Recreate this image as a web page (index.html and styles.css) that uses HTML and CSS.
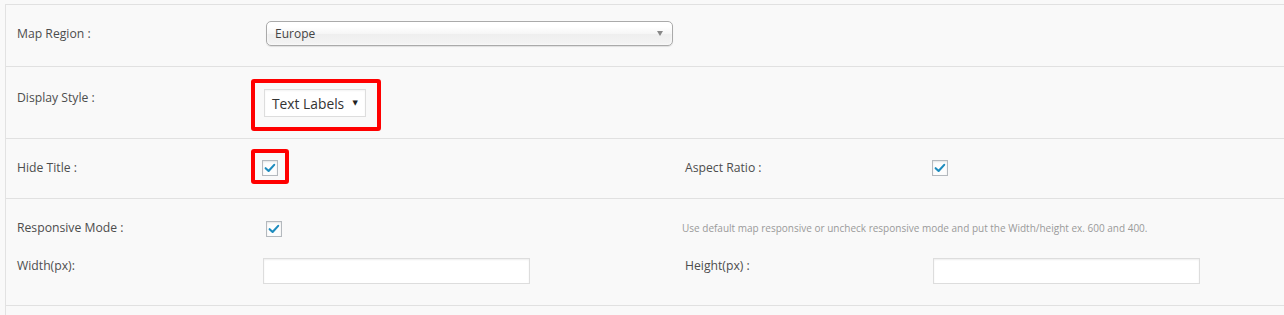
FILE: index.html
```html
<!DOCTYPE html>
<html>
<head>
<meta charset="utf-8">
<link rel="stylesheet" href="styles.css">
</head>
<body>
<div class="panel">
  <div class="row row-region">
    <div class="label">Map Region :</div>
    <div class="field wide">
      <div class="chosen">
        <span class="chosen-text">Europe</span>
        <span class="chosen-arrow"></span>
      </div>
    </div>
  </div>

  <div class="row row-style">
    <div class="label">Display Style :</div>
    <div class="field">
      <div class="mark mark-select">
        <div class="plain-select">
          <span>Text Labels</span>
          <span class="caret">&#9660;</span>
        </div>
      </div>
    </div>
  </div>

  <div class="row row-title">
    <div class="label">Hide Title :</div>
    <div class="field">
      <div class="mark mark-check">
        <span class="check"><svg viewBox="0 0 16 16" width="14" height="14"><path d="M3 8.2 L6.4 11.4 L12.8 4.4" fill="none" stroke="#1e8cbe" stroke-width="2.4" stroke-linecap="round" stroke-linejoin="round"/></svg></span>
      </div>
    </div>
    <div class="label">Aspect Ratio :</div>
    <div class="field">
      <span class="check check-aspect"><svg viewBox="0 0 16 16" width="14" height="14"><path d="M3 8.2 L6.4 11.4 L12.8 4.4" fill="none" stroke="#1e8cbe" stroke-width="2.4" stroke-linecap="round" stroke-linejoin="round"/></svg></span>
    </div>
  </div>

  <div class="row row-size">
    <div class="label">Responsive Mode :</div>
    <div class="field">
      <span class="check check-resp"><svg viewBox="0 0 16 16" width="14" height="14"><path d="M3 8.2 L6.4 11.4 L12.8 4.4" fill="none" stroke="#1e8cbe" stroke-width="2.4" stroke-linecap="round" stroke-linejoin="round"/></svg></span>
    </div>
    <div class="help">Use default map responsive or uncheck responsive mode and put the Width/height ex. 600 and 400.</div>

    <div class="label label-input">Width(px):</div>
    <div class="field"><input class="text-input" type="text"></div>
    <div class="label label-input">Height(px) :</div>
    <div class="field"><input class="text-input" type="text"></div>
  </div>
  <div class="row-end"></div>
</div>
</body>
</html>
```

FILE: styles.css
```css
html, body {
  margin: 0;
  padding: 0;
  background: #f9f9f9;
}

body {
  font-family: "Open Sans", "Liberation Sans", sans-serif;
  color: #555;
  font-size: 12px;
  padding-top: 4px;
  padding-left: 5px;
  height: 311px;
  overflow: hidden;
}

.panel {
  border-left: 1px solid #e2e2e2;
  background: #f9f9f9;
  height: 100%;
}

.row {
  display: grid;
  grid-template-columns: 246px 422px 248px 1fr;
  align-items: start;
  padding-left: 11px;
  border-top: 1px solid #e1e1e1;
}

.label {
  line-height: 16px;
  font-size: 12.2px;
  color: #4d4d4d;
}

.field {
  display: flex;
  align-items: flex-start;
}

/* Row 1 */
.row-region {
  height: 61px;
}
.row-region .label {
  margin-top: 21px;
}
.field.wide {
  grid-column: 2 / 3;
}
.chosen {
  margin-top: 16px;
  margin-left: 3px;
  width: 407px;
  height: 25px;
  box-sizing: border-box;
  border: 1px solid #aaa;
  border-radius: 5px;
  background: linear-gradient(#fff 20%, #f6f6f6 50%, #eee 52%, #f4f4f4 100%);
  box-shadow: inset 0 0 3px #fff, 0 1px 1px rgba(0,0,0,0.1);
  display: flex;
  align-items: center;
  justify-content: space-between;
  padding: 0 9px 0 8px;
  color: #444;
  font-size: 12px;
}
.chosen-arrow {
  width: 0;
  height: 0;
  border-left: 3px solid transparent;
  border-right: 3px solid transparent;
  border-top: 5px solid #888;
}

/* Row 2 */
.row-style {
  height: 71px;
}
.row-style .label {
  margin-top: 23px;
}
.mark {
  border: 4px solid #ff0000;
  border-radius: 3px;
  margin-left: -12px;
}
.mark-select {
  margin-top: 12px;
  padding: 6px 11px 10px 9px;
}
.plain-select {
  width: 102px;
  height: 28px;
  box-sizing: border-box;
  border: 1px solid #ddd;
  background: #fff;
  box-shadow: inset 0 1px 2px rgba(0,0,0,0.05);
  display: flex;
  align-items: center;
  justify-content: space-between;
  padding: 0 7px 0 7px;
  font-size: 13.8px;
  color: #333;
}
.caret {
  font-size: 7px;
  color: #222;
  font-family: "DejaVu Sans", sans-serif;
}

/* Row 3 */
.row-title {
  height: 59px;
}
.row-title .label {
  margin-top: 21px;
}
.mark-check {
  margin-top: 10px;
  padding: 7px 7px 4px 7px;
  display: flex;
}
.check {
  width: 16px;
  height: 16px;
  box-sizing: border-box;
  border: 1px solid #b4b9be;
  background: #fdfdfd;
  box-shadow: inset 0 1px 2px rgba(0,0,0,0.1);
  display: flex;
  align-items: center;
  justify-content: center;
}
.check-aspect {
  margin-top: 21px;
  margin-left: -1px;
}

/* Row 4 */
.row-size {
  height: 108px;
  box-sizing: border-box;
  border-bottom: 1px solid #e1e1e1;
  grid-template-rows: 30px 27px;
  row-gap: 15px;
  padding-top: 14px;
}
.row-size .label {
  margin-top: 7px;
}
.row-size .label-input {
  margin-top: 0;
}
.check-resp {
  margin-top: 8px;
  margin-left: 3px;
}
.help {
  grid-column: 3 / 5;
  margin-left: -3px;
  margin-top: 9px;
  font-size: 10px;
  line-height: 12px;
  color: #9a9a9a;
}
.text-input {
  margin: 0;
  width: 267px;
  height: 26px;
  box-sizing: border-box;
  border: 1px solid #ddd;
  background: #fff;
  box-shadow: inset 0 1px 2px rgba(0,0,0,0.07);
  font-family: inherit;
  outline: none;
  padding: 0 6px;
}

.row-end {
  height: 20px;
}
```
